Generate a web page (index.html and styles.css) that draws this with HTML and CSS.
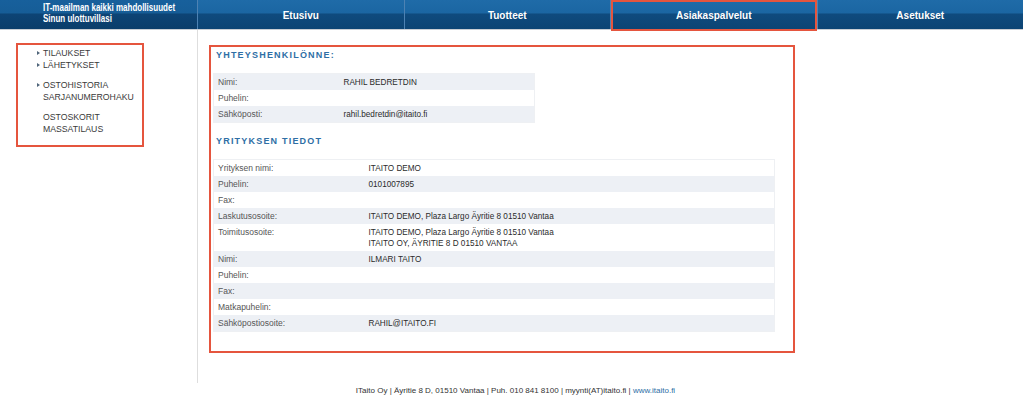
FILE: index.html
```html
<!DOCTYPE html>
<html lang="fi">
<head>
<meta charset="utf-8">
<title>ITaito - Asiakaspalvelut</title>
<link rel="stylesheet" href="styles.css">
</head>
<body>
<header class="topbar">
  <div class="logo">
    <span>IT-maailman kaikki mahdollisuudet</span>
    <span>Sinun ulottuvillasi</span>
  </div>
  <nav class="nav">
    <a class="nav-item" href="#">Etusivu</a>
    <a class="nav-item" href="#">Tuotteet</a>
    <a class="nav-item is-marked" href="#">Asiakaspalvelut</a>
    <a class="nav-item" href="#">Asetukset</a>
  </nav>
</header>

<div class="page">
  <aside class="sidebar">
    <div class="side-box">
      <ul class="side-group">
        <li class="arrow">TILAUKSET</li>
        <li class="arrow">LÄHETYKSET</li>
      </ul>
      <ul class="side-group">
        <li class="arrow">OSTOHISTORIA</li>
        <li>SARJANUMEROHAKU</li>
      </ul>
      <ul class="side-group">
        <li>OSTOSKORIT</li>
        <li>MASSATILAUS</li>
      </ul>
    </div>
  </aside>

  <main class="main">
    <section class="main-box">
      <h2 class="heading">YHTEYSHENKILÖNNE:</h2>
      <table class="info info-contact">
        <tr class="shaded"><td class="lbl">Nimi:</td><td class="val">RAHIL BEDRETDIN</td></tr>
        <tr><td class="lbl">Puhelin:</td><td class="val"></td></tr>
        <tr class="shaded"><td class="lbl">Sähköposti:</td><td class="val">rahil.bedretdin@itaito.fi</td></tr>
      </table>

      <h2 class="heading heading-second">YRITYKSEN TIEDOT</h2>
      <table class="info info-company">
        <tr><td class="lbl">Yrityksen nimi:</td><td class="val">ITAITO DEMO</td></tr>
        <tr class="shaded"><td class="lbl">Puhelin:</td><td class="val">0101007895</td></tr>
        <tr><td class="lbl">Fax:</td><td class="val"></td></tr>
        <tr class="shaded"><td class="lbl">Laskutusosoite:</td><td class="val">ITAITO DEMO, Plaza Largo Äyritie 8 01510 Vantaa</td></tr>
        <tr><td class="lbl">Toimitusosoite:</td><td class="val">ITAITO DEMO, Plaza Largo Äyritie 8 01510 Vantaa<br>ITAITO OY, ÄYRITIE 8 D 01510 VANTAA</td></tr>
        <tr class="shaded"><td class="lbl">Nimi:</td><td class="val">ILMARI TAITO</td></tr>
        <tr><td class="lbl">Puhelin:</td><td class="val"></td></tr>
        <tr class="shaded"><td class="lbl">Fax:</td><td class="val"></td></tr>
        <tr><td class="lbl">Matkapuhelin:</td><td class="val"></td></tr>
        <tr class="shaded"><td class="lbl">Sähköpostiosoite:</td><td class="val">RAHIL@ITAITO.FI</td></tr>
      </table>
    </section>
  </main>
</div>

<footer class="footer">
  ITaito Oy | Äyritie 8 D, 01510 Vantaa | Puh. 010 841 8100 | myynti(AT)itaito.fi | <a href="#">www.itaito.fi</a>
</footer>
</body>
</html>
```

FILE: styles.css
```css
* { box-sizing: border-box; }

html, body {
  margin: 0;
  padding: 0;
  background: #ffffff;
}

body {
  width: 1023px;
  height: 410px;
  overflow: hidden;
  font-family: "Liberation Sans", Arial, sans-serif;
  color: #333;
}

/* ---------- top bar ---------- */
.topbar {
  display: flex;
  height: 30px;
  border-bottom: 1px solid #c9ced4;
  background: linear-gradient(to bottom, #1f6ba8 0, #1b66a2 45%, #0f4b7e 48%, #0c4474 100%);
}

.logo {
  width: 197px;
  flex: none;
  display: flex;
  flex-direction: column;
  align-items: flex-start;
  padding: 2px 0 0 43px;
  color: #fff;
  font-family: "Liberation Sans", Arial, sans-serif;
  font-weight: bold;
  font-size: 10px;
  line-height: 11px;
  white-space: nowrap;
  background: linear-gradient(to bottom, #17609c 0, #165d97 45%, #0d4475 48%, #0b3d6a 100%);
}

.logo span {
  display: block;
  transform: scaleX(0.8);
  transform-origin: left center;
}

.nav {
  flex: 1;
  display: grid;
  grid-template-columns: repeat(4, 1fr);
}

.nav-item {
  position: relative;
  display: flex;
  align-items: center;
  justify-content: center;
  padding-top: 2px;
  border-left: 1px solid #4d82b3;
  color: #fff;
  text-decoration: none;
  font-weight: bold;
  font-size: 10px;
}

.nav-item.is-marked::after {
  content: "";
  position: absolute;
  left: 0;
  top: 0;
  right: 0;
  bottom: -2px;
  border: 2px solid #e5553e;
}

/* ---------- page body ---------- */
.page {
  display: flex;
  height: 353px;
}

.sidebar {
  width: 198px;
  flex: none;
  border-right: 1px solid #dedede;
  padding: 13px 0 0 16px;
}

.side-box {
  width: 128px;
  height: 104px;
  border: 2px solid #e5553e;
  padding: 3px 0 0 25px;
}

.side-group {
  list-style: none;
  margin: 0 0 9px 0;
  padding: 0;
}

.side-group li {
  position: relative;
  font-size: 8.7px;
  line-height: 11.5px;
  color: #3a3a3a;
  white-space: nowrap;
}

.side-group li.arrow::before {
  content: "";
  position: absolute;
  left: -6px;
  top: 3px;
  border-left: 3px solid #50657a;
  border-top: 2.5px solid transparent;
  border-bottom: 2.5px solid transparent;
}

.main {
  flex: 1;
  padding: 15px 0 0 11px;
}

.main-box {
  width: 586px;
  height: 308px;
  border: 2px solid #e5553e;
  padding: 3px 0 0 2px;
}

.heading {
  margin: 0 0 12px 3px;
  font-size: 9px;
  line-height: 11px;
  font-weight: bold;
  letter-spacing: 1.2px;
  color: #2e6ea5;
}

.heading-second {
  margin-top: 13px;
}

.info {
  border-collapse: collapse;
  table-layout: fixed;
  border: 1px solid #eef0f3;
}

.info-contact { width: 322px; }
.info-company { width: 562px; }

.info td {
  padding: 3px 4px 2px 4px;
  line-height: 11px;
  font-size: 8.5px;
  vertical-align: top;
  height: 16px;
}

.info-contact .lbl { width: 126px; }
.info-company .lbl { width: 151px; }

.info .lbl { color: #555; }
.info .val { color: #2b2b2b; font-size: 8.2px; }

.info tr.shaded td { background: #edf0f5; }

/* ---------- footer ---------- */
.footer {
  height: 27px;
  padding: 2px 0 0 8px;
  text-align: center;
  font-size: 8px;
  line-height: 11px;
  color: #333;
}

.footer a {
  color: #2e6ea5;
  text-decoration: none;
}
```
